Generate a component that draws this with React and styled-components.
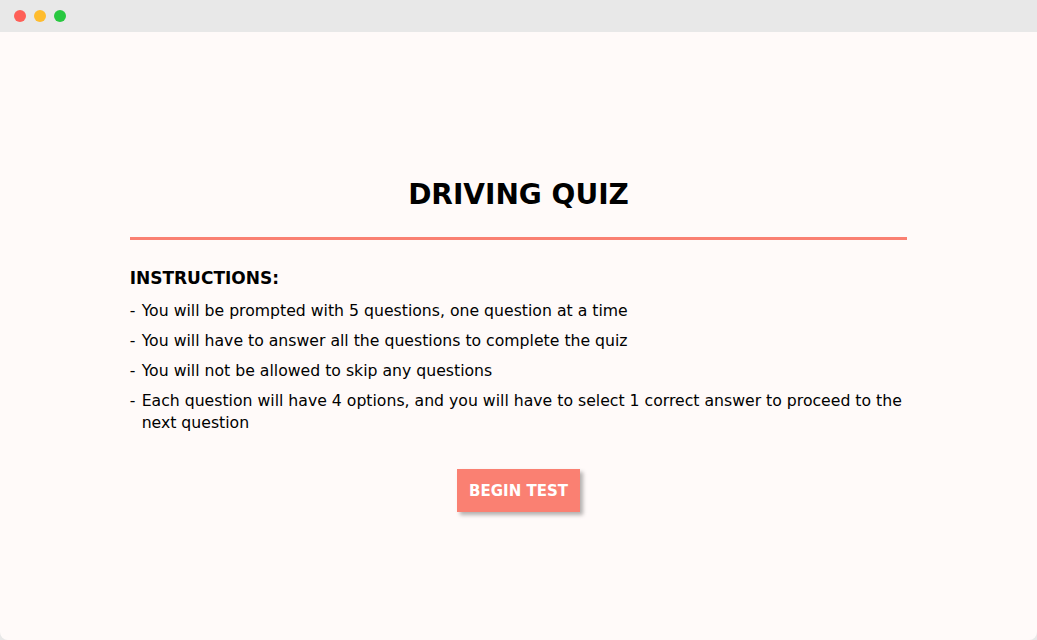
import React from 'react';
import styled, { createGlobalStyle } from 'styled-components';

const GlobalStyle = createGlobalStyle`
  html, body {
    margin: 0;
    padding: 0;
    background: #e8e8e8;
  }
  body {
    font-family: 'DejaVu Sans', 'Liberation Sans', sans-serif;
  }
`;

const Window = styled.div`
  width: 1037px;
  height: 640px;
  display: flex;
  flex-direction: column;
  background: #e8e8e8;
  overflow: hidden;
`;

const TitleBar = styled.div`
  height: 32px;
  flex: none;
  display: flex;
  align-items: center;
  gap: 8px;
  padding-left: 14px;
  background: #e8e8e8;
`;

const Dot = styled.span`
  width: 12px;
  height: 12px;
  border-radius: 50%;
  background: ${(p) => p.color};
`;

const Page = styled.main`
  flex: 1;
  background: #fffaf9;
  border-radius: 0 0 8px 8px;
  display: flex;
  justify-content: center;
`;

const Quiz = styled.section`
  width: 75%;
  padding-top: 146px;
  display: flex;
  flex-direction: column;
`;

const Title = styled.h1`
  margin: 0;
  font-size: 28px;
  font-weight: 700;
  line-height: 34px;
  text-align: center;
  color: #000;
`;

const Divider = styled.hr`
  margin: 25px 0 0;
  border: none;
  height: 3px;
  background: #fa8072;
`;

const Heading = styled.h2`
  margin: 26px 0 0;
  font-size: 17px;
  font-weight: 700;
  line-height: 24px;
  color: #000;
`;

const List = styled.ul`
  margin: 10px 0 0;
  padding: 0;
  list-style: none;
  display: flex;
  flex-direction: column;
  gap: 8px;
`;

const Item = styled.li`
  display: flex;
  font-size: 15.7px;
  line-height: 22px;
  color: #000;
`;

const Bullet = styled.span`
  flex: none;
  width: 12px;
`;

const Actions = styled.div`
  display: flex;
  justify-content: center;
  margin-top: 35px;
`;

const Button = styled.button`
  border: none;
  background: #fa8072;
  color: #fff;
  font-family: inherit;
  font-size: 15px;
  font-weight: 700;
  height: 43px;
  padding: 0 12px;
  box-shadow: 3px 3px 4px rgba(0, 0, 0, 0.3);
  cursor: pointer;
`;

const instructions = [
  'You will be prompted with 5 questions, one question at a time',
  'You will have to answer all the questions to complete the quiz',
  'You will not be allowed to skip any questions',
  'Each question will have 4 options, and you will have to select 1 correct answer to proceed to the next question',
];

export default function App() {
  return (
    <Window>
      <GlobalStyle />
      <TitleBar>
        <Dot color="#fe5f57" />
        <Dot color="#febc2e" />
        <Dot color="#28c840" />
      </TitleBar>
      <Page>
        <Quiz>
          <Title>DRIVING QUIZ</Title>
          <Divider />
          <Heading>INSTRUCTIONS:</Heading>
          <List>
            {instructions.map((text) => (
              <Item key={text}>
                <Bullet>-</Bullet>
                <span>{text}</span>
              </Item>
            ))}
          </List>
          <Actions>
            <Button>BEGIN TEST</Button>
          </Actions>
        </Quiz>
      </Page>
    </Window>
  );
}
